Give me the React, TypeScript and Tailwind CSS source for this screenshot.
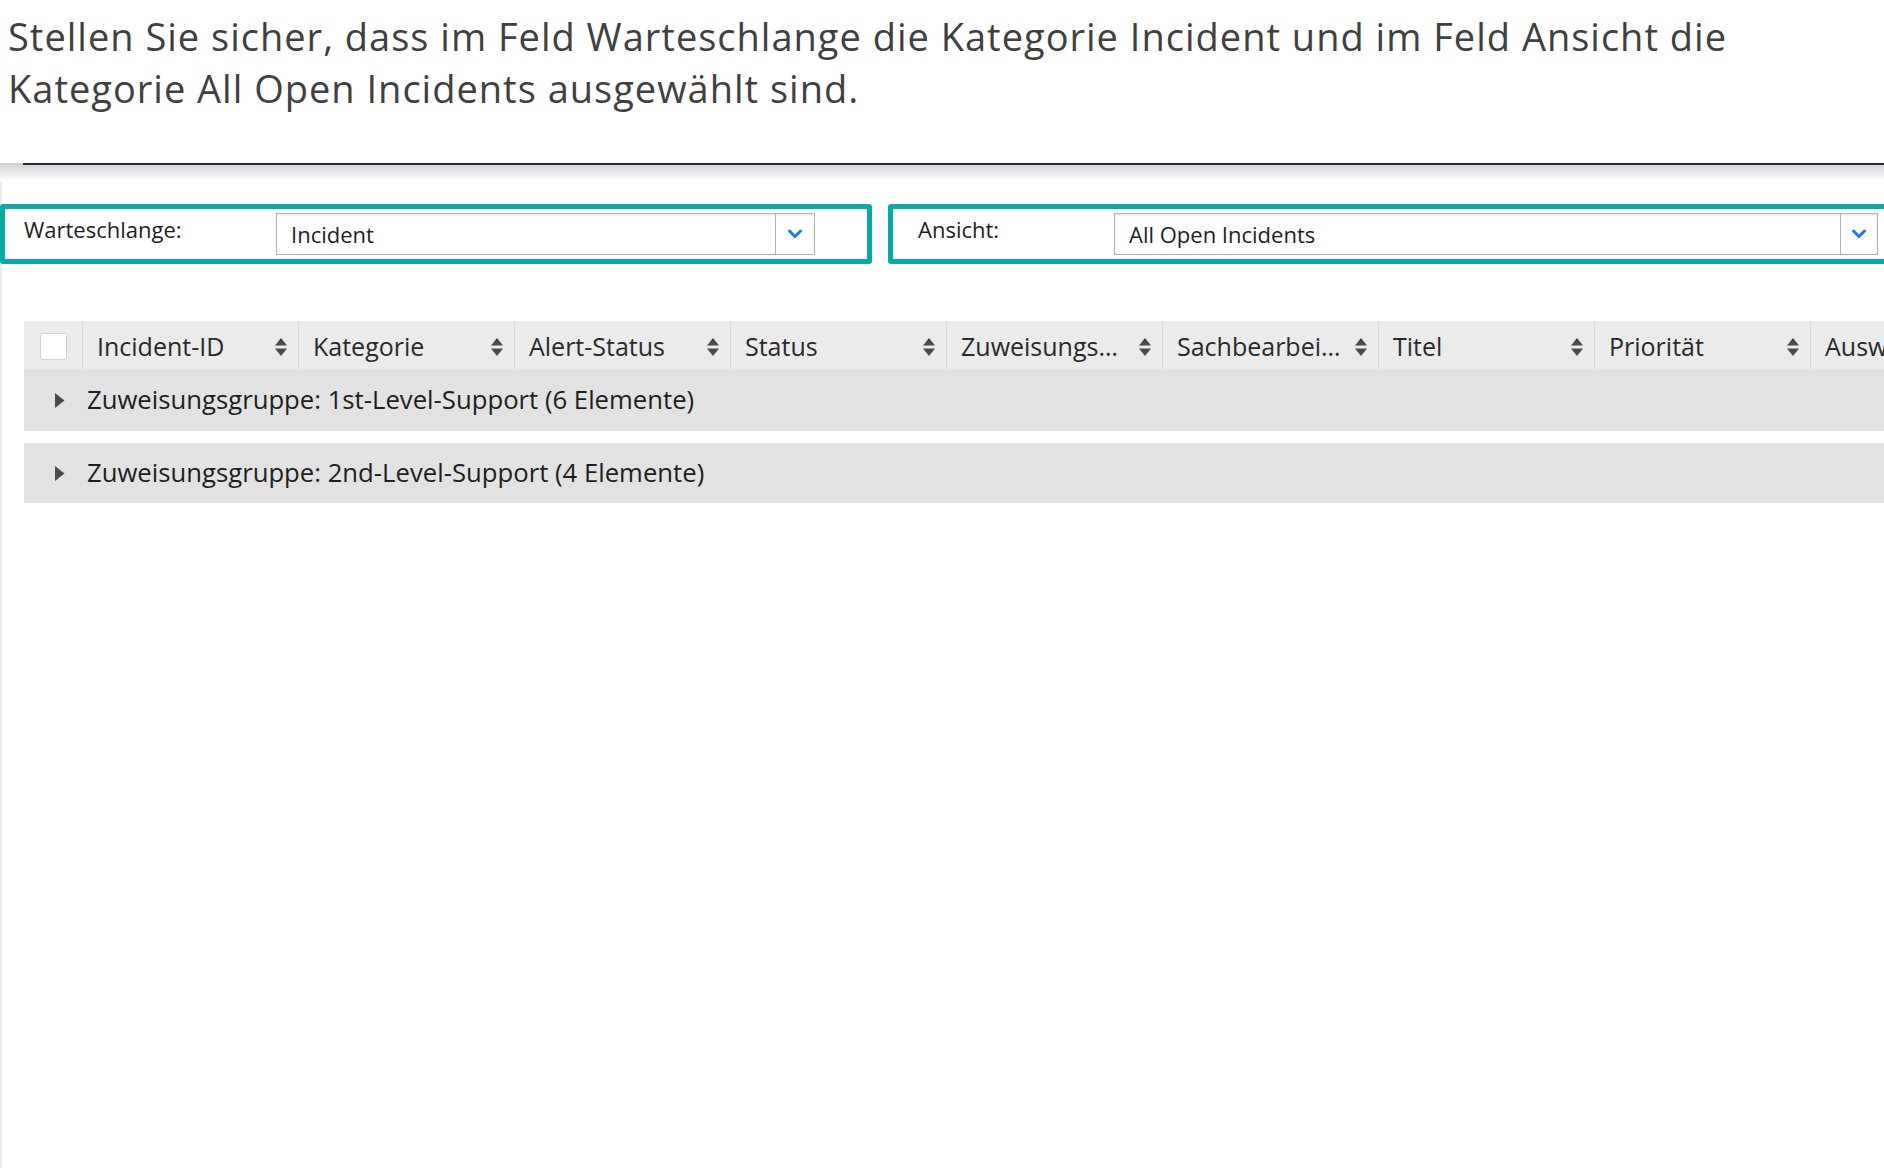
import React from "react";

function Chevron() {
  return (
    <svg width="16" height="10" viewBox="0 0 16 10" fill="none">
      <path d="M2.5 2 L8 7.5 L13.5 2" stroke="#1f7be0" strokeWidth="3" strokeLinecap="round" strokeLinejoin="round" />
    </svg>
  );
}

function SortIcon() {
  return (
    <svg width="14" height="20" viewBox="0 0 14 20">
      <path d="M7 1 L13 8.5 L1 8.5 Z" fill="#4a4a4a" />
      <path d="M7 19 L13 11.5 L1 11.5 Z" fill="#4a4a4a" />
    </svg>
  );
}

function Triangle() {
  return (
    <svg width="11" height="17" viewBox="0 0 11 17">
      <path d="M1 1 L10.5 8.5 L1 16 Z" fill="#4a4a4a" />
    </svg>
  );
}

const headers = [
  "Incident-ID",
  "Kategorie",
  "Alert-Status",
  "Status",
  "Zuweisungs…",
  "Sachbearbei…",
  "Titel",
  "Priorität",
  "Auswirkung",
];

export default function App() {
  return (
    <div className="w-[1884px] h-[1168px] bg-white overflow-hidden font-['Open_Sans',sans-serif]">
      <div className="h-[163px] pl-[8px] pt-[10px] text-[38px] leading-[52px] tracking-[1px] text-[#404040] whitespace-nowrap">
        Stellen Sie sicher, dass im Feld Warteschlange die Kategorie Incident und im Feld Ansicht die
        <br />
        Kategorie All Open Incidents ausgewählt sind.
      </div>
      <div className="flex h-[2px]">
        <div className="w-[23px] bg-[#cfcfcf]" />
        <div className="flex-1 bg-[#232a4f]" />
      </div>
      <div className="h-[1003px] bg-[linear-gradient(to_right,#eeeeee_0,#eeeeee_2px,#ffffff_2px)]">
        <div className="h-[16px] bg-gradient-to-b from-[#d6d6d6] to-white" />
        <div className="mt-[23px] flex gap-[16px] w-[1920px]">
          <div className="w-[872px] h-[60px] shrink-0 border-[5px] border-[#0aa9a4] rounded-[3px] flex items-start bg-white">
            <div className="w-[271px] pl-[19px] mt-[5px] text-[22px] leading-[30px] font-medium text-[#1e1e1e]">
              Warteschlange:
            </div>
            <div className="mt-[4px] w-[539px] h-[42px] border border-[#b3b3b3] flex bg-white shadow-[inset_0_1px_2px_rgba(0,0,0,0.12)]">
              <div className="flex-1 pl-[14px] pt-[1px] flex items-center text-[22px] text-[#1e1e1e]">Incident</div>
              <div className="w-[39px] border-l border-[#b3b3b3] flex items-center justify-center">
                <Chevron />
              </div>
            </div>
          </div>
          <div className="w-[1010px] h-[60px] shrink-0 border-[5px] border-[#0aa9a4] rounded-[3px] flex items-start bg-white">
            <div className="w-[221px] pl-[25px] mt-[5px] text-[22px] leading-[30px] font-medium text-[#1e1e1e]">
              Ansicht:
            </div>
            <div className="mt-[4px] w-[764px] h-[42px] border border-[#b3b3b3] flex bg-white shadow-[inset_0_1px_2px_rgba(0,0,0,0.12)]">
              <div className="flex-1 pl-[14px] pt-[1px] flex items-center text-[22px] text-[#1e1e1e]">All Open Incidents</div>
              <div className="w-[37px] border-l border-[#b3b3b3] flex items-center justify-center">
                <Chevron />
              </div>
            </div>
          </div>
        </div>

        <div className="mt-[57px] ml-[24px] w-[1900px]">
          <div className="h-[48px] bg-[#ebebeb] flex">
            <div className="w-[58px] shrink-0 pl-[16px] pt-[12px]">
              <div className="w-[27px] h-[27px] bg-white border border-[#d3d3d3] rounded-[2px]" />
            </div>
            {headers.map((h) => (
              <div
                key={h}
                className="w-[216px] shrink-0 border-l border-[#d6d6d6] flex items-center justify-between pl-[14px] pr-[10px] pt-[3px] text-[25px] text-[#2a2a2a] whitespace-nowrap overflow-hidden"
              >
                <span>{h}</span>
                <SortIcon />
              </div>
            ))}
          </div>
          <div className="h-[62px] bg-[#e2e2e2] flex items-center pl-[30px] gap-[22px]">
            <Triangle />
            <span className="text-[25.7px] text-[#1e1e1e]">Zuweisungsgruppe: 1st-Level-Support (6 Elemente)</span>
          </div>
          <div className="mt-[12px] h-[60px] bg-[#e2e2e2] flex items-center pl-[30px] gap-[22px]">
            <Triangle />
            <span className="text-[25.7px] text-[#1e1e1e]">Zuweisungsgruppe: 2nd-Level-Support (4 Elemente)</span>
          </div>
        </div>
      </div>
    </div>
  );
}
